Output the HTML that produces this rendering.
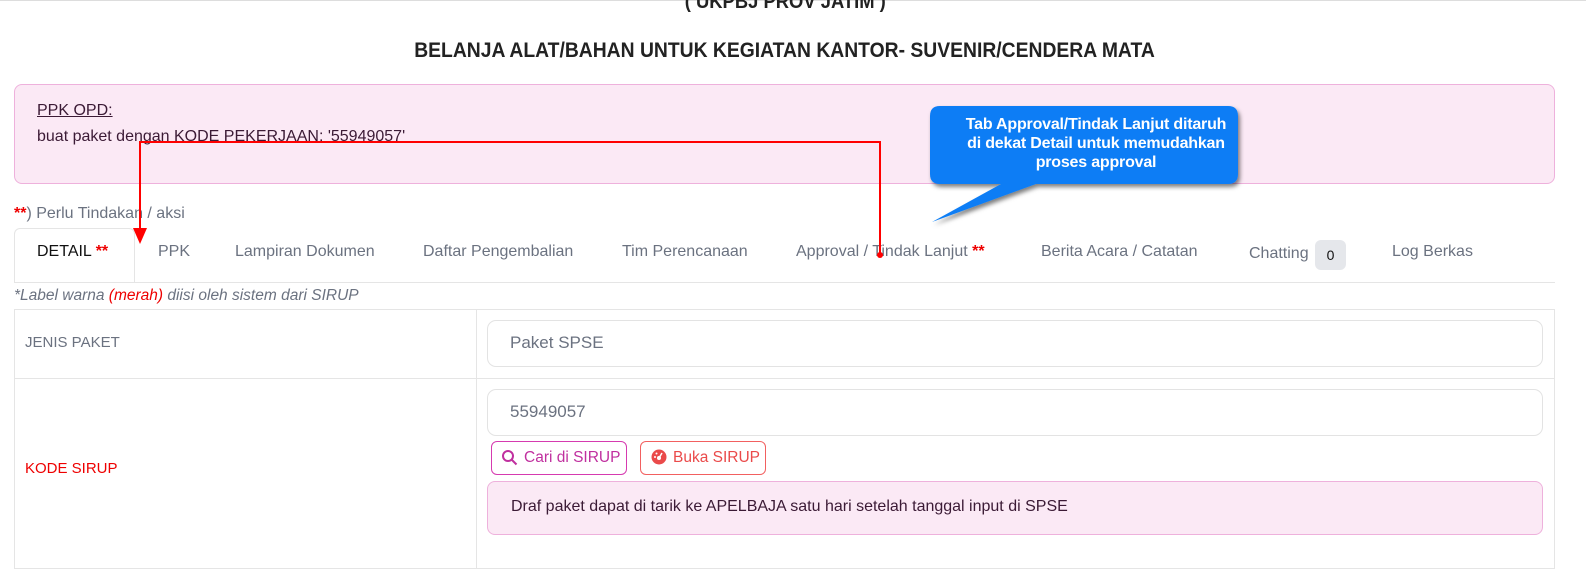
<!DOCTYPE html>
<html><head><meta charset="utf-8"><style>
*{box-sizing:border-box;margin:0;padding:0}
body{width:1586px;height:560px;overflow:hidden;background:#fff;font-family:"Liberation Sans",sans-serif;position:relative}
.a{position:absolute;white-space:nowrap}
.t{font-size:16px;color:#6b7280;top:243px}
.inp{position:absolute;left:487px;width:1056px;height:47px;border:1px solid #e3e3e3;border-radius:9px;font-size:17px;color:#6b7280;padding:12px 22px}
</style></head><body>
<div style="position:absolute;left:0;top:0;width:1586px;height:1px;background:#ddd"></div>
<div class="a" style="left:0;width:1570px;text-align:center;top:-9px;font-size:20px;font-weight:bold;color:#222"><span style="display:inline-block;transform:scaleX(.92)">( UKPBJ PROV JATIM )</span></div>
<div class="a" style="left:0;width:1568px;text-align:center;top:39px;font-size:21px;font-weight:bold;color:#222"><span style="display:inline-block;transform:scaleX(.92)">BELANJA ALAT/BAHAN UNTUK KEGIATAN KANTOR- SUVENIR/CENDERA MATA</span></div>
<div style="position:absolute;left:14px;top:84px;width:1541px;height:100px;background:#fbe9f5;border:1px solid #eeb1dc;border-radius:8px"></div>
<div class="a" style="left:37px;top:102px;font-size:16px;color:#3b1a35;text-decoration:underline">PPK OPD:</div>
<div class="a" style="left:37px;top:128px;font-size:16px;color:#3b1a35">buat paket dengan KODE PEKERJAAN: '55949057'</div>
<div class="a" style="left:14px;top:205px;font-size:16px;color:#6b7280"><b style="color:#e00">**</b>) Perlu Tindakan / aksi</div>
<div style="position:absolute;left:14px;top:228px;width:121px;height:55px;border:1px solid #e5e5e5;border-bottom:none;border-radius:6px 6px 0 0;background:#fff"></div>
<div style="position:absolute;left:14px;top:282px;width:1541px;height:1px;background:#e5e5e5"></div>
<div class="a t" style="left:37px;color:#111">DETAIL <b style="color:#e00">**</b></div>
<div class="a t" style="left:158px">PPK</div>
<div class="a t" style="left:235px">Lampiran Dokumen</div>
<div class="a t" style="left:423px">Daftar Pengembalian</div>
<div class="a t" style="left:622px">Tim Perencanaan</div>
<div class="a t" style="left:796px">Approval / Tindak Lanjut <b style="color:#e00">**</b></div>
<div class="a t" style="left:1041px">Berita Acara / Catatan</div>
<div class="a t" style="left:1249px;top:245px">Chatting</div>
<div style="position:absolute;left:1315px;top:240px;width:31px;height:30px;background:#e5e7eb;border-radius:6px;font-size:14px;text-align:center;line-height:30px;color:#111">0</div>
<div class="a t" style="left:1392px">Log Berkas</div>
<div class="a" style="left:14px;top:287px;font-size:15.5px;font-style:italic;color:#6b7280">*Label warna <span style="color:#e00">(merah)</span> diisi oleh sistem dari SIRUP</div>
<div style="position:absolute;left:14px;top:309px;width:1541px;height:260px;border:1px solid #e5e5e5"></div>
<div style="position:absolute;left:14px;top:378px;width:1541px;height:1px;background:#e5e5e5"></div>
<div style="position:absolute;left:476px;top:309px;width:1px;height:260px;background:#e5e5e5"></div>
<div class="a" style="left:25px;top:334px;font-size:15px;color:#6b7280">JENIS PAKET</div>
<div class="a" style="left:25px;top:460px;font-size:15px;color:#e00">KODE SIRUP</div>
<div class="inp" style="top:320px">Paket SPSE</div>
<div class="inp" style="top:389px">55949057</div>
<div style="position:absolute;left:491px;top:441px;width:136px;height:34px;border:1px solid #d63ab0;border-radius:6px;color:#c0309f;font-size:15.5px;padding:7px 0 0 32px">Cari di SIRUP</div>
<svg style="position:absolute;left:501px;top:449px" width="17" height="17" viewBox="0 0 17 17"><circle cx="7" cy="7" r="5" fill="none" stroke="#c0309f" stroke-width="2"/><path d="M11 11l4.5 4.5" stroke="#c0309f" stroke-width="2"/></svg>
<div style="position:absolute;left:640px;top:441px;width:126px;height:34px;border:1px solid #f26060;border-radius:6px;color:#ea4a4a;font-size:15.5px;padding:7px 0 0 32px">Buka SIRUP</div>
<svg style="position:absolute;left:651px;top:449px" width="16" height="16" viewBox="0 0 16 16"><circle cx="8" cy="8" r="7.5" fill="#ea4a4a"/><circle cx="8" cy="9" r="2" fill="#fff"/><path d="M8 9L11 4" stroke="#fff" stroke-width="1.5"/><circle cx="4" cy="8" r="1" fill="#fff"/><circle cx="5.5" cy="4.5" r="1" fill="#fff"/></svg>
<div style="position:absolute;left:487px;top:481px;width:1056px;height:54px;background:#fbe9f5;border:1px solid #eeb1dc;border-radius:8px;font-size:16px;color:#3b1a35;padding:16px 23px">Draf paket dapat di tarik ke APELBAJA satu hari setelah tanggal input di SPSE</div>
<svg style="position:absolute;left:0;top:0" width="1586" height="560">
<defs><filter id="s" x="-20%" y="-20%" width="140%" height="160%"><feDropShadow dx="2" dy="3" stdDeviation="2" flood-color="#000" flood-opacity=".5"/></filter></defs>
<g filter="url(#s)"><path d="M940 106H1228Q1238 106 1238 116V174Q1238 184 1228 184H1036L932 222L1001 184H940Q930 184 930 174V116Q930 106 940 106Z" fill="#0a7df5"/></g>
<path d="M140 230V142H880V254" fill="none" stroke="#f00" stroke-width="2"/>
<path d="M133 228L147 228L140 244Z" fill="#f00"/>
<circle cx="880" cy="255" r="3" fill="#f00"/>
</svg>
<div class="a" style="left:942px;width:308px;text-align:center;top:115px;font-size:16px;font-weight:bold;color:#fff;line-height:19px;white-space:normal;letter-spacing:-.2px">Tab Approval/Tindak Lanjut ditaruh<br>di dekat Detail untuk memudahkan<br>proses approval</div>
</body></html>
